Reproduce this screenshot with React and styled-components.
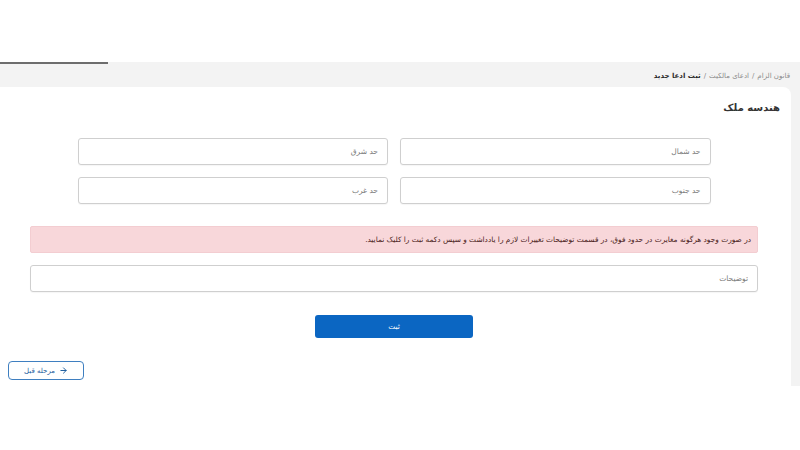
import React from "react";
import styled, { createGlobalStyle } from "styled-components";
import { ArrowRight } from "lucide-react";

const Global = createGlobalStyle`
  html, body { margin: 0; padding: 0; background: #fff; }
  body { font-family: "DejaVu Sans", "Noto Sans", sans-serif; }
  * { box-sizing: border-box; }
`;

const Page = styled.div`
  direction: rtl;
  padding-top: 62px;
  width: 800px;
`;

const Shell = styled.main`
  background: #f3f3f3;
  display: flex;
  flex-direction: column;
`;

const Progress = styled.div`
  height: 2px;
  width: 108px;
  align-self: flex-end;
  background: #6d6d6d;
`;

const Breadcrumb = styled.nav`
  height: 23px;
  display: flex;
  align-items: center;
  padding-right: 10px;
  font-size: 7px;
  color: #8a8a8a;
  gap: 3px;
`;

const Crumb = styled.span`
  font-weight: ${(p) => (p.$current ? 700 : 400)};
  color: ${(p) => (p.$current ? "#2b2b2b" : "#8a8a8a")};
`;

const Card = styled.section`
  background: #fff;
  margin-right: 9px;
  border-radius: 0 8px 0 0;
  padding: 14px 11px 6px 8px;
  display: flex;
  flex-direction: column;
`;

const Title = styled.h2`
  margin: 0;
  font-size: 10px;
  line-height: 14px;
  font-weight: 700;
  color: #333;
`;

const FieldGrid = styled.div`
  width: 633px;
  margin: 23px auto 0;
  display: grid;
  grid-template-columns: 1fr 1fr;
  column-gap: 12px;
  row-gap: 12px;
`;

const Input = styled.input`
  height: 27px;
  width: 100%;
  border: 1px solid #cfcfcf;
  border-radius: 3px;
  padding: 0 9px;
  font-family: inherit;
  font-size: 7.5px;
  background: #fff;
  box-shadow: 0 1px 1px rgba(0, 0, 0, 0.04);
  outline: none;
  &::placeholder { color: #7a7a7a; }
`;

const Inner = styled.div`
  padding: 0 22px;
  display: flex;
  flex-direction: column;
`;

const Alert = styled.div`
  margin-top: 22px;
  height: 27px;
  display: flex;
  align-items: center;
  padding: 0 6px;
  background: #f8d7da;
  border: 1px solid #f3cdd1;
  border-radius: 2px;
  color: #4a1c20;
  font-size: 7.4px;
`;

const WideInput = styled(Input)`
  margin-top: 12px;
`;

const Submit = styled.button`
  margin: 23px auto 0;
  width: 158px;
  height: 23px;
  border: none;
  border-radius: 3px;
  background: #0b66c2;
  color: #fff;
  font-family: inherit;
  font-size: 7.5px;
  font-weight: 400;
`;

const Back = styled.button`
  margin-top: 23px;
  align-self: flex-end;
  width: 76px;
  height: 19px;
  border: 1px solid #3f7fc0;
  border-radius: 4px;
  background: #fff;
  color: #1d5e9e;
  font-family: inherit;
  font-size: 7px;
  display: flex;
  align-items: center;
  justify-content: center;
  gap: 4px;
  padding: 0;
  direction: rtl;
`;

export default function App() {
  return (
    <Page>
      <Global />
      <Shell>
        <Progress />
        <Breadcrumb>
          <Crumb>قانون الزام</Crumb>
          <span>/</span>
          <Crumb>ادعای مالکیت</Crumb>
          <span>/</span>
          <Crumb $current>ثبت ادعا جدید</Crumb>
        </Breadcrumb>
        <Card>
          <Title>هندسه ملک</Title>
          <FieldGrid>
            <Input placeholder="حد شمال" />
            <Input placeholder="حد شرق" />
            <Input placeholder="حد جنوب" />
            <Input placeholder="حد غرب" />
          </FieldGrid>
          <Inner>
            <Alert>
              در صورت وجود هرگونه مغایرت در حدود فوق، در قسمت توضیحات تغییرات لازم را یادداشت و سپس دکمه ثبت را کلیک نمایید.
            </Alert>
            <WideInput placeholder="توضیحات" />
          </Inner>
          <Submit>ثبت</Submit>
          <Back>
            <ArrowRight size={9} strokeWidth={2.6} />
            مرحله قبل
          </Back>
        </Card>
      </Shell>
    </Page>
  );
}
